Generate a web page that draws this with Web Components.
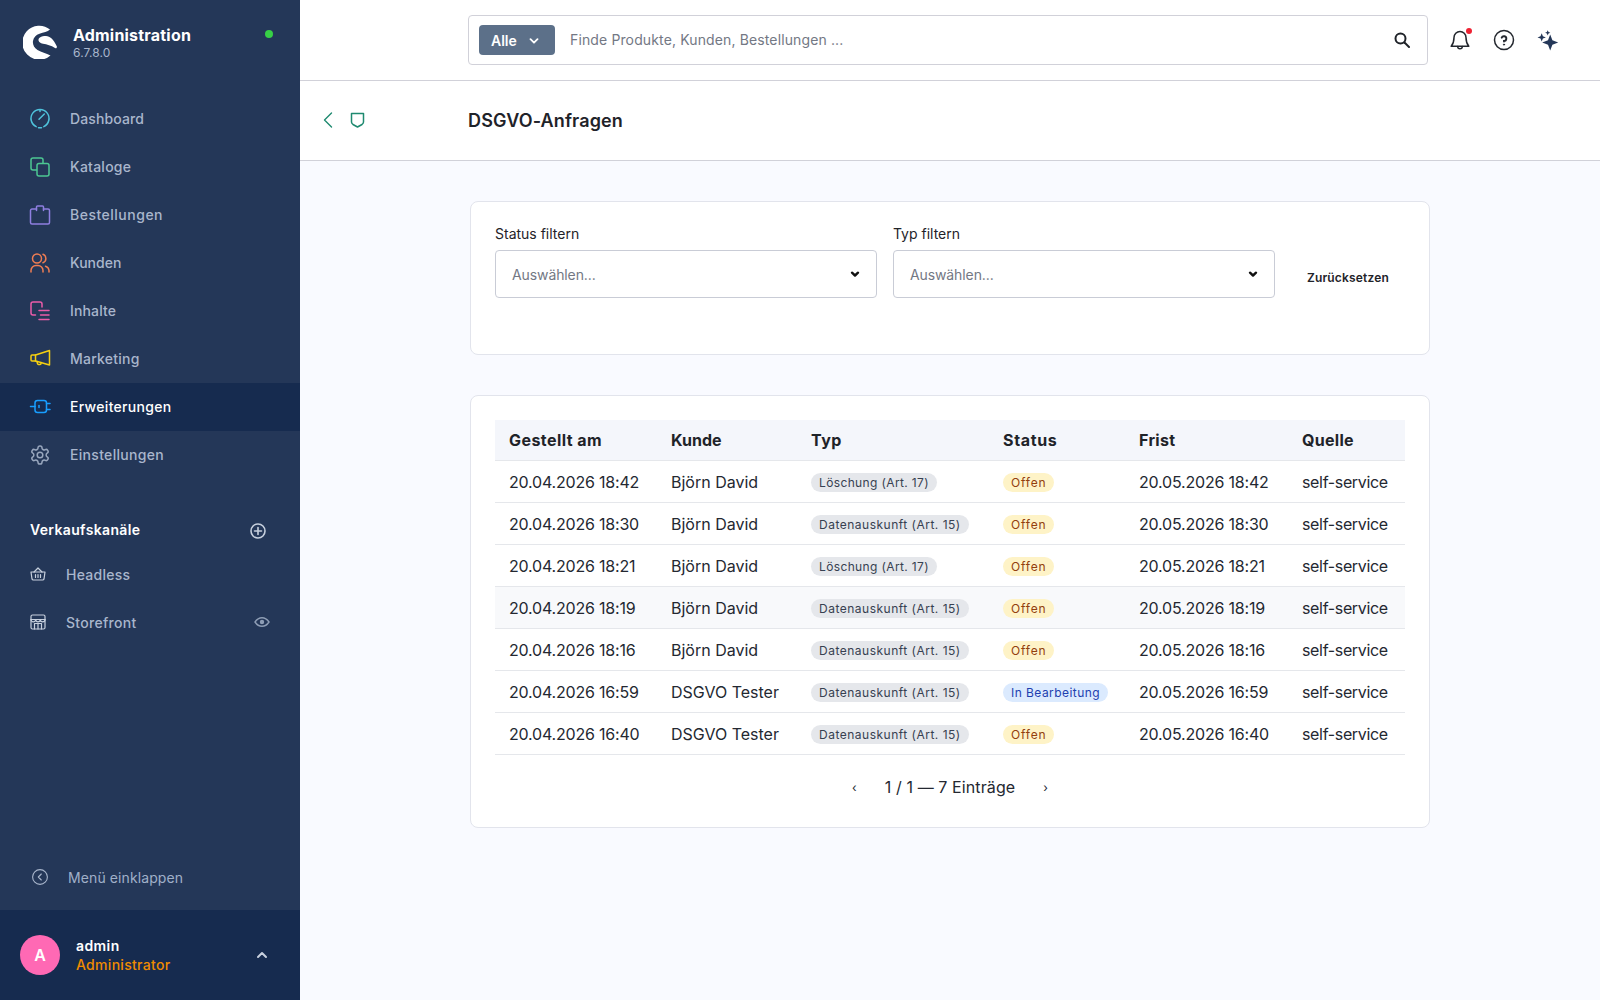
<!DOCTYPE html>
<html lang="de">
<head>
<meta charset="utf-8">
<title>DSGVO-Anfragen</title>
<style>
  html, body { margin: 0; height: 100%; }
  body { font-family: Inter, "Liberation Sans", sans-serif; color: #1f2329; overflow: hidden; }
  adm-app { height: 100vh; }
</style>
</head>
<body>
<adm-app>
  <adm-sidebar slot="side">
    <adm-nav-item style="letter-spacing:.11px" color="#4fc3dc" label="Dashboard" icon="dashboard"></adm-nav-item>
    <adm-nav-item style="letter-spacing:.25px" color="#4cc792" label="Kataloge" icon="catalog"></adm-nav-item>
    <adm-nav-item style="letter-spacing:.5px" color="#8e7fe0" label="Bestellungen" icon="bag"></adm-nav-item>
    <adm-nav-item color="#ef7d53" label="Kunden" icon="users"></adm-nav-item>
    <adm-nav-item style="letter-spacing:.15px" color="#ea5ca8" label="Inhalte" icon="content"></adm-nav-item>
    <adm-nav-item style="letter-spacing:.23px" color="#f5cf11" label="Marketing" icon="megaphone"></adm-nav-item>
    <adm-nav-item style="letter-spacing:.31px" color="#189eff" label="Erweiterungen" icon="plug" active></adm-nav-item>
    <adm-nav-item style="letter-spacing:.31px" color="#98a6bd" label="Einstellungen" icon="gear"></adm-nav-item>
  </adm-sidebar>
  <adm-topbar slot="top"></adm-topbar>
  <adm-smartbar slot="top">DSGVO-Anfragen</adm-smartbar>
  <adm-filter-card></adm-filter-card>
  <adm-request-table></adm-request-table>
</adm-app>

<script>
const ICONS = {
  dashboard: '<path d="M6.2 17.6A9 9 0 1 1 13.8 17.6"/><path d="M8.5 18.7a9 9 0 0 0 3 0"/><path d="M9 10.3 14.3 5"/><path d="M10 1v1.6"/>',
  catalog: '<rect x="1" y="1" width="12" height="12" rx="2"/><rect x="7" y="6.5" width="12" height="12.5" rx="2" fill="var(--bg)"/>',
  bag: '<path d="M6.5 4H2a1.500 1.500 0 0 0-1.500 1.500v12A1.500 1.500 0 0 0 2 19h16a1.500 1.500 0 0 0 1.500-1.500v-12A1.500 1.500 0 0 0 18 4h-4.500"/><path d="M6.500 5.500V2a1 1 0 0 1 1-1h5a1 1 0 0 1 1 1v3.500"/>',
  users: '<circle cx="7" cy="5.5" r="4.5"/><path d="M1 19v-1.500A5 5 0 0 1 6 12.500h2a5 5 0 0 1 5 5V19"/><path d="M13 1.300a4.500 4.500 0 0 1 0 8.400"/><path d="M15.500 13.200A5 5 0 0 1 19 17.500V19"/>',
  content: '<path d="M5.5 14H3a2 2 0 0 1-2-2V3a2 2 0 0 1 2-2h7a2 2 0 0 1 2 2v3"/><path d="M9 9.5h10M10.5 14H19M9 18.5h10"/>',
  megaphone: '<path d="M5.5 6 19.5 1.500V16L5.500 12z"/><path d="M5.500 6H2a1 1 0 0 0-1 1v4a1 1 0 0 0 1 1h3.500"/><path d="M7 12.500l.5 2.200a1 1 0 0 0 1 .8h1.500a1 1 0 0 0 1-1v-1"/>',
  plug: '<path d="M.5 9.500H5"/><rect x="5" y="3.500" width="11.500" height="12" rx="2.500"/><path d="M16.500 6.500H20M16.500 12.500H20"/><path d="M9 8.500v2"/>',
  gear: '<circle cx="10" cy="10" r="2.800"/><path transform="translate(-.8 -.8) scale(.9)" stroke-width="1.670" d="M12.220 2h-.44a2 2 0 0 0-2 2v.18a2 2 0 0 1-1 1.730l-.43.25a2 2 0 0 1-2 0l-.15-.08a2 2 0 0 0-2.730.73l-.22.38a2 2 0 0 0 .73 2.730l.15.1a2 2 0 0 1 1 1.720v.51a2 2 0 0 1-1 1.740l-.15.09a2 2 0 0 0-.73 2.730l.22.38a2 2 0 0 0 2.730.73l.15-.08a2 2 0 0 1 2 0l.43.25a2 2 0 0 1 1 1.730V20a2 2 0 0 0 2 2h.44a2 2 0 0 0 2-2v-.18a2 2 0 0 1 1-1.730l.43-.25a2 2 0 0 1 2 0l.15.08a2 2 0 0 0 2.730-.73l.22-.39a2 2 0 0 0-.73-2.730l-.15-.08a2 2 0 0 1-1-1.740v-.5a2 2 0 0 1 1-1.740l.15-.09a2 2 0 0 0 .73-2.730l-.22-.38a2 2 0 0 0-2.730-.73l-.15.08a2 2 0 0 1-2 0l-.43-.25a2 2 0 0 1-1-1.730V4a2 2 0 0 0-2-2z"/>'
};

class AdmApp extends HTMLElement {
  connectedCallback() {
    this.attachShadow({ mode: 'open' });
    this.shadowRoot.innerHTML = `
      <style>
        :host { display: grid; grid-template-columns: 300px 1fr; background: #f9faff; }
        .main { min-width: 0; display: flex; flex-direction: column; }
        .content { width: 960px; margin: 0 auto; padding-top: 40px; display: flex; flex-direction: column; gap: 40px; }
      </style>
      <slot name="side"></slot>
      <div class="main">
        <slot name="top"></slot>
        <div class="content"><slot></slot></div>
      </div>
    `;
  }
}

class AdmSidebar extends HTMLElement {
  connectedCallback() {
    this.attachShadow({ mode: 'open' });
    this.shadowRoot.innerHTML = `
      <style>
        :host { display: flex; flex-direction: column; height: 100vh; background: #243758; color: #a9b6cc; font-size: 14px; font-weight: 500; }
        .head { height: 95px; box-sizing: border-box; padding: 25px 25px 0 23px; display: flex; gap: 16px; position: relative; }
        .logo { width: 34px; height: 34px; flex: none; }
        .name { color: #fff; font-size: 16px; font-weight: 700; line-height: 20px; letter-spacing: .2px; }
        .ver { font-size: 12px; font-weight: 400; line-height: 16px; letter-spacing: .1px; }
        .dot { position: absolute; left: 265px; top: 30px; width: 8px; height: 8px; border-radius: 50%; background: #37d046; }
        .section { display: flex; align-items: center; justify-content: space-between; margin-top: 40px; padding: 0 34px 0 30px; height: 20px; color: #fff; font-weight: 600; letter-spacing: .35px; }
        .section svg { margin-top: 4px; }
        .channels { margin-top: 11px; }
        .channel { display: flex; align-items: center; height: 48px; padding: 0 30px; gap: 20px; }
        .channel svg.i { width: 16px; height: 16px; flex: none; }
        .channel .eye { margin-left: auto; }
        .spacer { flex: 1; }
        .collapse { display: flex; align-items: center; gap: 20px; height: 36px; padding: 0 32px; margin-bottom: 15px; color: #a0b0c8; font-weight: 400; letter-spacing: .1px; }
        .user { height: 90px; background: #162b4f; display: flex; align-items: center; padding: 0 20px; gap: 16px; }
        .avatar { width: 40px; height: 40px; border-radius: 50%; background: #ff69b4; color: #fff; font-size: 16px; font-weight: 600; display: flex; align-items: center; justify-content: center; }
        .uname { color: #fff; font-weight: 600; line-height: 19px; letter-spacing: .4px; }
        .urole { color: #f08c00; line-height: 19px; letter-spacing: .3px; }
        .chev { margin-left: auto; margin-right: 12px; }
      </style>
      <div class="head">
        <svg class="logo" viewBox="0 0 34 34">
          <path fill="#fff" d="M27 4.500A17 17 0 1 0 27.500 30.500C23 28 18.500 27.500 14.500 25C10.800 22.700 9.500 19 10 16C10.500 12.500 13 9.800 16.500 8.700C20.500 7.500 24.500 6.800 27 4.500z"/>
          <path fill="#fff" d="M15.500 14.500C16 12 19.500 10.800 23 11C27 11.300 30.500 14 33.900 21.500C34 23 33.200 23.800 32 23C28 20.500 24 19.500 20 18.800C17.500 18.300 15.200 16.700 15.500 14.500z"/>
        </svg>
        <div>
          <div class="name">Administration</div>
          <div class="ver">6.7.8.0</div>
        </div>
        <span class="dot"></span>
      </div>
      <slot></slot>
      <div class="section">Verkaufskanäle
        <svg width="16" height="16" viewBox="0 0 16 16" fill="none" stroke="#c7d0de" stroke-width="1.6" stroke-linecap="round"><circle cx="8" cy="8" r="7"/><path d="M8 4.500v7M4.500 8h7"/></svg>
      </div>
      <div class="channels">
        <div class="channel" style="letter-spacing:.25px">
          <svg class="i" viewBox="0 0 16 16" fill="none" stroke="#c7d0de" stroke-width="1.2" stroke-linejoin="round" stroke-linecap="round"><path d="M1 6h14l-1 7a1.500 1.500 0 0 1-1.500 1h-9A1.500 1.500 0 0 1 2 13z"/><path d="M4 6l4-4 4 4"/><path d="M5.500 8.500v3M8 8.500v3M10.500 8.500v3"/></svg>
          <span>Headless</span>
        </div>
        <div class="channel" style="letter-spacing:.3px">
          <svg class="i" viewBox="0 0 16 16" fill="none" stroke="#c7d0de" stroke-width="1.2" stroke-linejoin="round" stroke-linecap="round"><rect x="1" y="1" width="14" height="14" rx="1.500"/><path d="M1 5.500h14"/><path d="M1 5.500a2.300 2.300 0 0 0 4.700 0 2.300 2.300 0 0 0 4.600 0 2.300 2.300 0 0 0 4.700 0"/><path d="M4.500 15V9.500h7V15M8 9.500V15"/></svg>
          <span>Storefront</span>
          <svg class="eye" width="16" height="16" viewBox="0 0 16 16" fill="none" stroke="#8e9db5" stroke-width="1.4"><path d="M1 8c2-3 4.300-4.300 7-4.300S13 5 15 8c-2 3-4.300 4.300-7 4.300S3 11 1 8z"/><circle cx="8" cy="8" r="1.500" fill="#8e9db5"/></svg>
        </div>
      </div>
      <div class="spacer"></div>
      <div class="collapse">
        <svg width="16" height="16" viewBox="0 0 16 16" fill="none" stroke="#a9b6cc" stroke-width="1.1" stroke-linecap="round" stroke-linejoin="round"><circle cx="8" cy="8" r="7.400"/><path d="M9.300 5 6.300 8l3 3"/></svg>
        <span>Menü einklappen</span>
      </div>
      <div class="user">
        <div class="avatar">A</div>
        <div><div class="uname">admin</div><div class="urole">Administrator</div></div>
        <svg class="chev" width="12" height="8" viewBox="0 0 12 8" fill="none" stroke="#c7d0de" stroke-width="2" stroke-linecap="round" stroke-linejoin="round"><path d="M2 6l4-4 4 4"/></svg>
      </div>
    `;
  }
}

class AdmNavItem extends HTMLElement {
  connectedCallback() {
    this.attachShadow({ mode: 'open' });
    this.shadowRoot.innerHTML = `
      <style>
        :host { display: flex; align-items: center; gap: 20px; height: 48px; box-sizing: border-box; padding: 0 30px 1px; --bg: #243758; }
        :host([active]) { background: #162b4f; color: #fff; --bg: #162b4f; }
        svg { width: 20px; height: 20px; flex: none; overflow: visible; }
      </style>
      <svg viewBox="0 0 20 20" fill="none" stroke="${this.getAttribute('color')}" stroke-width="1.5" stroke-linecap="round" stroke-linejoin="round">${ICONS[this.getAttribute('icon')]}</svg>
      <span>${this.getAttribute('label')}</span>
    `;
  }
}

class AdmTopbar extends HTMLElement {
  connectedCallback() {
    this.attachShadow({ mode: 'open' });
    this.shadowRoot.innerHTML = `
      <style>
        :host { display: flex; align-items: center; height: 81px; box-sizing: border-box; background: #fff; border-bottom: 1px solid #d1d1d9; padding: 0 0 1px 168px; gap: 20px; }
        .search { width: 960px; height: 50px; box-sizing: border-box; border: 1px solid #d1d1d9; border-radius: 4px; display: flex; align-items: center; padding: 0 17px 0 10px; font-size: 14px; color: #737884; letter-spacing: .13px; }
        .all { width: 76px; height: 30px; box-sizing: border-box; border-radius: 4px; background: #5c7089; color: #fff; font-weight: 600; display: flex; align-items: center; padding: 2px 0 0 12px; gap: 12px; margin-right: 15px; letter-spacing: 0; }
        .ph { flex: 1; }
        .icons { display: flex; gap: 20px; align-items: center; position: relative; margin-top: 1px; }
        .icons svg { width: 24px; height: 24px; display: block; }
        .badge { position: absolute; left: 18px; top: 0; width: 6px; height: 6px; border-radius: 50%; background: #ee2233; }
      </style>
      <div class="search">
        <div class="all">Alle
          <svg width="10" height="6" viewBox="0 0 10 6" fill="none" stroke="#fff" stroke-width="1.8" stroke-linecap="round" stroke-linejoin="round"><path d="M1.500 1.200 5 4.700l3.500-3.500"/></svg>
        </div>
        <span class="ph">Finde Produkte, Kunden, Bestellungen ...</span>
        <svg width="16" height="16" viewBox="0 0 16 16" fill="none" stroke="#1f2329" stroke-width="2" stroke-linecap="round"><circle cx="6.500" cy="6.500" r="5"/><path d="M10.500 10.500 15 15"/></svg>
      </div>
      <div class="icons">
        <svg viewBox="0 0 24 24" fill="none" stroke="#23272e" stroke-width="1.5" stroke-linecap="round" stroke-linejoin="round"><path d="M12 3.500a6 6 0 0 0-6 6c0 5-1.300 7-2.800 8.800h17.600C19.300 16.500 18 14.500 18 9.500a6 6 0 0 0-6-6z"/><path d="M9.700 18.500a2.300 2.300 0 0 0 4.600 0"/></svg>
        <span class="badge"></span>
        <svg viewBox="0 0 24 24" fill="none" stroke="#23272e" stroke-width="1.5" stroke-linecap="round"><circle cx="12" cy="12" r="9.500"/><path d="M9.700 9.700A2.400 2.400 0 1 1 12 13v.6" stroke-width="1.9"/><circle cx="12" cy="16.600" r=".6" fill="#23272e" stroke-width="1"/></svg>
        <svg viewBox="0 0 24 24" fill="#243758"><path d="M14.200 6.500l2.200 5.800 5.800 2.200-5.800 2.200-2.200 5.800-2.200-5.800-5.800-2.200 5.800-2.200z"/><path d="M5.700 5.200l1.200 3 3 1.200-3 1.200-1.200 3-1.200-3-3-1.200 3-1.200z"/><path d="M11.700 2.200l.8 1.800 1.800.8-1.800.8-.8 1.800-.8-1.800-1.800-.8 1.800-.8z"/></svg>
      </div>
    `;
  }
}

class AdmSmartbar extends HTMLElement {
  connectedCallback() {
    this.attachShadow({ mode: 'open' });
    this.shadowRoot.innerHTML = `
      <style>
        :host { display: flex; align-items: center; height: 80px; box-sizing: border-box; background: #fff; border-bottom: 1px solid #d1d1d9; padding-left: 23px; }
        .ico { display: flex; align-items: center; gap: 17px; width: 145px; padding-bottom: 1px; }
        h1 { margin: 0; font-size: 18px; font-weight: 600; color: #1f2329; letter-spacing: .13px; }
      </style>
      <div class="ico">
        <svg width="10" height="16" viewBox="0 0 10 16" fill="none" stroke="#1f8a70" stroke-width="1.4" stroke-linecap="round" stroke-linejoin="round"><path d="M8.500 1 1.500 8l7 7"/></svg>
        <svg width="15" height="16" viewBox="0 0 15 16" fill="none" stroke="#1f8a70" stroke-width="1.5" stroke-linejoin="round"><path d="M1.500 1.500h12V10c0 1.200-.6 1.800-1.500 2.500L7.500 15 3 12.500C2.100 11.800 1.500 11.200 1.500 10z"/></svg>
      </div>
      <h1><slot></slot></h1>
    `;
  }
}

class AdmSelect extends HTMLElement {
  connectedCallback() {
    this.attachShadow({ mode: 'open' });
    this.shadowRoot.innerHTML = `
      <style>
        :host { display: block; font-size: 14px; }
        label { display: block; line-height: 16px; margin-bottom: 8px; color: #1f2329; }
        .box { height: 48px; box-sizing: border-box; border: 1px solid #c9ccd6; border-radius: 4px; background: #fff; display: flex; align-items: center; justify-content: space-between; padding: 0 16px; color: #737884; }
        .box span { letter-spacing: -.1px; }
      </style>
      <label>${this.getAttribute('label')}</label>
      <div class="box"><span>Auswählen...</span>
        <svg width="10" height="7" viewBox="0 0 10 7" fill="none" stroke="#111" stroke-width="2.4" stroke-linecap="round" stroke-linejoin="round"><path d="M2 1.700 5 4.500l3-2.800"/></svg>
      </div>
    `;
  }
}

class AdmFilterCard extends HTMLElement {
  connectedCallback() {
    this.attachShadow({ mode: 'open' });
    this.shadowRoot.innerHTML = `
      <style>
        :host { display: grid; grid-template-columns: 1fr 1fr auto; gap: 16px; height: 154px; box-sizing: border-box; padding: 24px; background: #fff; border: 1px solid #e2e4ec; border-radius: 8px; align-items: start; }
        button { all: unset; font: 600 12px Inter, sans-serif; color: #1f2329; padding: 0 16px; height: 48px; display: flex; align-items: center; margin-top: 27px; letter-spacing: .17px; }
      </style>
      <adm-select label="Status filtern"></adm-select>
      <adm-select label="Typ filtern"></adm-select>
      <button>Zurücksetzen</button>
    `;
  }
}

class AdmBadge extends HTMLElement {
  connectedCallback() {
    this.attachShadow({ mode: 'open' });
    this.shadowRoot.innerHTML = `
      <style>
        :host { display: inline-block; font-size: 12px; line-height: 19px; padding: 0 8px; border-radius: 10px; background: #e5e7eb; color: #374151; letter-spacing: .5px; vertical-align: middle; }
        :host([kind="short"]) { letter-spacing: .37px; }
        :host([tone="open"]) { background: #fef3c7; color: #92400e; letter-spacing: .8px; }
        :host([tone="busy"]) { background: #dbeafe; color: #1e40af; letter-spacing: .45px; }
      </style>
      <slot></slot>
    `;
  }
}

class AdmRequestTable extends HTMLElement {
  connectedCallback() {
    const L = 'Löschung (Art. 17)', D = 'Datenauskunft (Art. 15)';
    const rows = [
      ['18:42', 'Björn David', L, 'open'],
      ['18:30', 'Björn David', D, 'open'],
      ['18:21', 'Björn David', L, 'open'],
      ['18:19', 'Björn David', D, 'open', true],
      ['18:16', 'Björn David', D, 'open'],
      ['16:59', 'DSGVO Tester', D, 'busy'],
      ['16:40', 'DSGVO Tester', D, 'open']
    ];
    const body = rows.map(([t, who, type, st, hover]) => `
      <tr class="${hover ? 'hover' : ''}">
        <td>20.04.2026 ${t}</td>
        <td>${who}</td>
        <td><adm-badge ${type === L ? 'kind="short"' : ''}>${type}</adm-badge></td>
        <td><adm-badge tone="${st}">${st === 'open' ? 'Offen' : 'In Bearbeitung'}</adm-badge></td>
        <td>20.05.2026 ${t}</td>
        <td>self-service</td>
      </tr>`).join('');
    this.attachShadow({ mode: 'open' });
    this.shadowRoot.innerHTML = `
      <style>
        :host { display: block; height: 433px; box-sizing: border-box; padding: 24px; background: #fff; border: 1px solid #e2e4ec; border-radius: 8px; font-size: 16px; }
        table { width: 100%; border-collapse: collapse; table-layout: fixed; }
        th, td { padding: 0 14px; text-align: left; border-bottom: 1px solid #e5e7eb; white-space: nowrap; }
        th { height: 40px; background: #f4f6fb; font-weight: 700; }
        th:nth-child(1) { letter-spacing: .45px; }
        th:nth-child(3) { letter-spacing: .5px; }
        th:nth-child(4) { letter-spacing: .65px; }
        th:nth-child(5), th:nth-child(6) { letter-spacing: .3px; }
        td { height: 41px; color: #242831; }
        td:nth-child(1), td:nth-child(5) { letter-spacing: -.2px; }
        td:nth-child(6) { letter-spacing: -.34px; }
        tr.hover td { background: #f8f9fb; }
        .pager { display: flex; justify-content: center; align-items: center; gap: 28px; margin-top: 21px; height: 22px; color: #242831; letter-spacing: .1px; }
        .pager span { font-size: 12px; }
      </style>
      <table>
        <colgroup><col style="width:162px"><col style="width:140px"><col style="width:192px"><col style="width:136px"><col style="width:163px"><col></colgroup>
        <thead><tr><th>Gestellt am</th><th>Kunde</th><th>Typ</th><th>Status</th><th>Frist</th><th>Quelle</th></tr></thead>
        <tbody>${body}</tbody>
      </table>
      <div class="pager"><span>‹</span>1 / 1 — 7 Einträge<span>›</span></div>
    `;
  }
}

customElements.define('adm-app', AdmApp);
customElements.define('adm-sidebar', AdmSidebar);
customElements.define('adm-nav-item', AdmNavItem);
customElements.define('adm-topbar', AdmTopbar);
customElements.define('adm-smartbar', AdmSmartbar);
customElements.define('adm-select', AdmSelect);
customElements.define('adm-filter-card', AdmFilterCard);
customElements.define('adm-badge', AdmBadge);
customElements.define('adm-request-table', AdmRequestTable);
</script>
</body>
</html>
